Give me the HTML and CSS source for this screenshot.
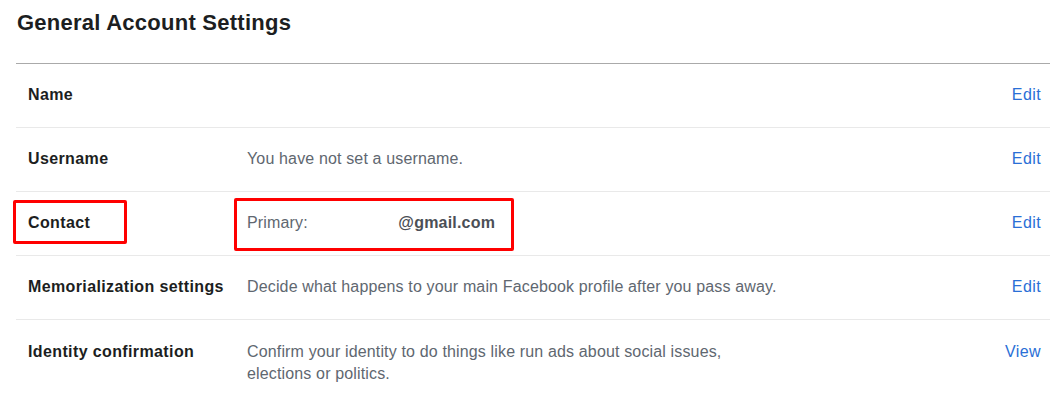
FILE: index.html
```html
<!DOCTYPE html>
<html>
<head>
<meta charset="utf-8">
<link rel="stylesheet" href="styles.css">
</head>
<body>
<div class="page">
  <h2 class="title">General Account Settings</h2>
  <div class="list">
    <div class="row">
      <div class="label">Name</div>
      <div class="desc"></div>
      <a class="action">Edit</a>
    </div>
    <div class="row">
      <div class="label">Username</div>
      <div class="desc">You have not set a username.</div>
      <a class="action">Edit</a>
    </div>
    <div class="row">
      <div class="label"><span class="mark mark-label"></span>Contact</div>
      <div class="desc"><span class="mark mark-email"></span>Primary: <span class="blank"></span><span class="email">@gmail.com</span></div>
      <a class="action">Edit</a>
    </div>
    <div class="row">
      <div class="label">Memorialization settings</div>
      <div class="desc">Decide what happens to your main Facebook profile after you pass away.</div>
      <a class="action">Edit</a>
    </div>
    <div class="row row-last">
      <div class="label">Identity confirmation</div>
      <div class="desc narrow">Confirm your identity to do things like run ads about social issues, elections or politics.</div>
      <a class="action">View</a>
    </div>
  </div>
</div>
</body>
</html>
```

FILE: styles.css
```css
html, body {
  margin: 0;
  padding: 0;
  background: #fff;
}
body {
  font-family: "Liberation Sans", Arial, sans-serif;
  color: #1c1e21;
}
.page {
  width: 1034px;
  margin-left: 16px;
}
.title {
  margin: 0;
  padding: 9px 0 0 1px;
  height: 54px;
  font-size: 22px;
  line-height: 28px;
  letter-spacing: 0.25px;
  font-weight: bold;
  color: #1c1e21;
  border-bottom: 1px solid #aaaaaa;
}
.row {
  display: grid;
  grid-template-columns: 219px 1fr auto;
  align-items: start;
  padding: 20px 10px 21px 12px;
  border-bottom: 1px solid #e9e9e9;
  font-size: 16px;
  line-height: 22px;
}
.row-last {
  border-bottom: none;
  padding-top: 21px;
}
.label {
  position: relative;
  font-weight: bold;
  letter-spacing: 0.38px;
  color: #1c1e21;
}
.desc {
  position: relative;
  letter-spacing: 0.15px;
  color: #606770;
}
.narrow {
  max-width: 500px;
}
.action {
  color: #2a6fd6;
  letter-spacing: 0.4px;
  margin-right: -1px;
  text-decoration: none;
}
.blank {
  display: inline-block;
  width: 86px;
}
.email {
  font-weight: bold;
  letter-spacing: 0.2px;
  color: #4b4f56;
}
.mark {
  position: absolute;
  border: 3px solid #ff0000;
  border-radius: 2px;
  box-sizing: border-box;
}
.mark-label {
  left: -15px;
  top: -12px;
  width: 114px;
  height: 44px;
}
.mark-email {
  left: -13px;
  top: -14px;
  width: 280px;
  height: 53px;
}
```
